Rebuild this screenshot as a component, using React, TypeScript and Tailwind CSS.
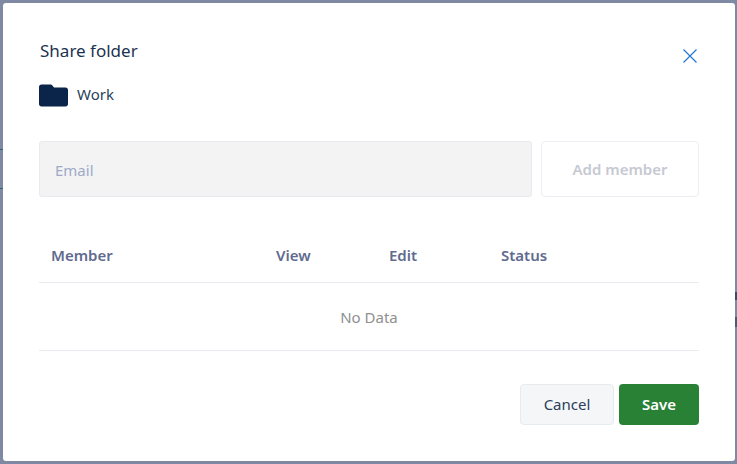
import React from "react";

const App = () => {
  return (
    <div className="relative h-[464px] w-[737px] overflow-hidden bg-[#7f89a4] pt-[3px] pl-[3px] font-['Noto_Sans',sans-serif]">
      {/* bits of the page showing behind the overlay */}
      <div className="absolute top-[149px] left-0 h-px w-[3px] bg-[#2f6a66]" />
      <div className="absolute top-[188px] left-0 h-px w-[3px] bg-[#2f6a66]" />
      <div className="absolute top-[292px] right-0 h-[8px] w-[2px] bg-[#3a4a6b]" />
      <div className="absolute top-[317px] right-0 h-[10px] w-[2px] bg-[#4a5878]" />

      <div className="relative flex h-[458px] w-[732px] flex-col rounded-[3px] bg-white pt-[36px] pr-[36px] pl-[36px]">
        {/* header */}
        <div className="flex items-start justify-between">
          <div className="flex flex-col">
            <h2 className="pl-[1px] text-[17px] leading-[24px] font-normal text-[#1c3350]">Share folder</h2>
            <div className="mt-[20px] flex items-center gap-[8px]">
              <svg width="30" height="24" viewBox="0 0 30 24">
                <path
                  d="M2.5 1.5H11.5C12.5 1.5 13 2 13.8 3L15 4.5H26.5C28 4.5 29 5.500 29 7V21C29 22.500 28 23.500 26.500 23.500H2.500C1 23.500 0 22.500 0 21V4C0 2.500 1 1.500 2.500 1.500Z"
                  fill="#0a2549"
                />
              </svg>
              <span className="-mt-[2px] text-[15px] leading-[20px] text-[#2a3f5c]">Work</span>
            </div>
          </div>
          <button className="mt-[9px] mr-[1px] text-[#1f78d1]">
            <svg width="16" height="16" viewBox="0 0 16 16" fill="none" stroke="currentColor" strokeWidth="1.2">
              <path d="M1.500 1.500L14.500 14.500M14.500 1.500L1.500 14.500" />
            </svg>
          </button>
        </div>

        {/* email row */}
        <div className="mt-[34px] flex gap-[9px]">
          <div className="flex h-[56px] w-[493px] items-center rounded-[3px] border border-[#e9e9f0] bg-[#f3f3f4] px-[15px] pt-[2px] text-[15px] text-[#a0aac8]">
            Email
          </div>
          <button className="h-[56px] w-[158px] rounded-[4px] border border-[#ededf3] bg-white text-[15px] font-semibold text-[#c6c9d2]">
            Add member
          </button>
        </div>

        {/* table */}
        <div className="mt-[32px] flex h-[54px] items-center border-b border-[#e9ebf0] pl-[12px] text-[15px] font-semibold text-[#5f6b8f]">
          <div className="w-[225px]">Member</div>
          <div className="w-[113px]">View</div>
          <div className="w-[112px]">Edit</div>
          <div>Status</div>
        </div>
        <div className="flex h-[68px] items-center justify-center border-b border-[#e9ebf0] pt-[2px] text-[15px] text-[#8f8f8f]">
          No Data
        </div>

        {/* footer */}
        <div className="mt-[33px] flex justify-end gap-[5px]">
          <button className="h-[41px] w-[94px] rounded-[4px] border border-[#e6ebf0] bg-[#f4f6f7] text-[15px] text-[#2a3f5c]">
            Cancel
          </button>
          <button className="h-[41px] w-[80px] rounded-[4px] bg-[#288135] text-[15px] font-semibold text-white">
            Save
          </button>
        </div>
      </div>
    </div>
  );
};

export default App;
